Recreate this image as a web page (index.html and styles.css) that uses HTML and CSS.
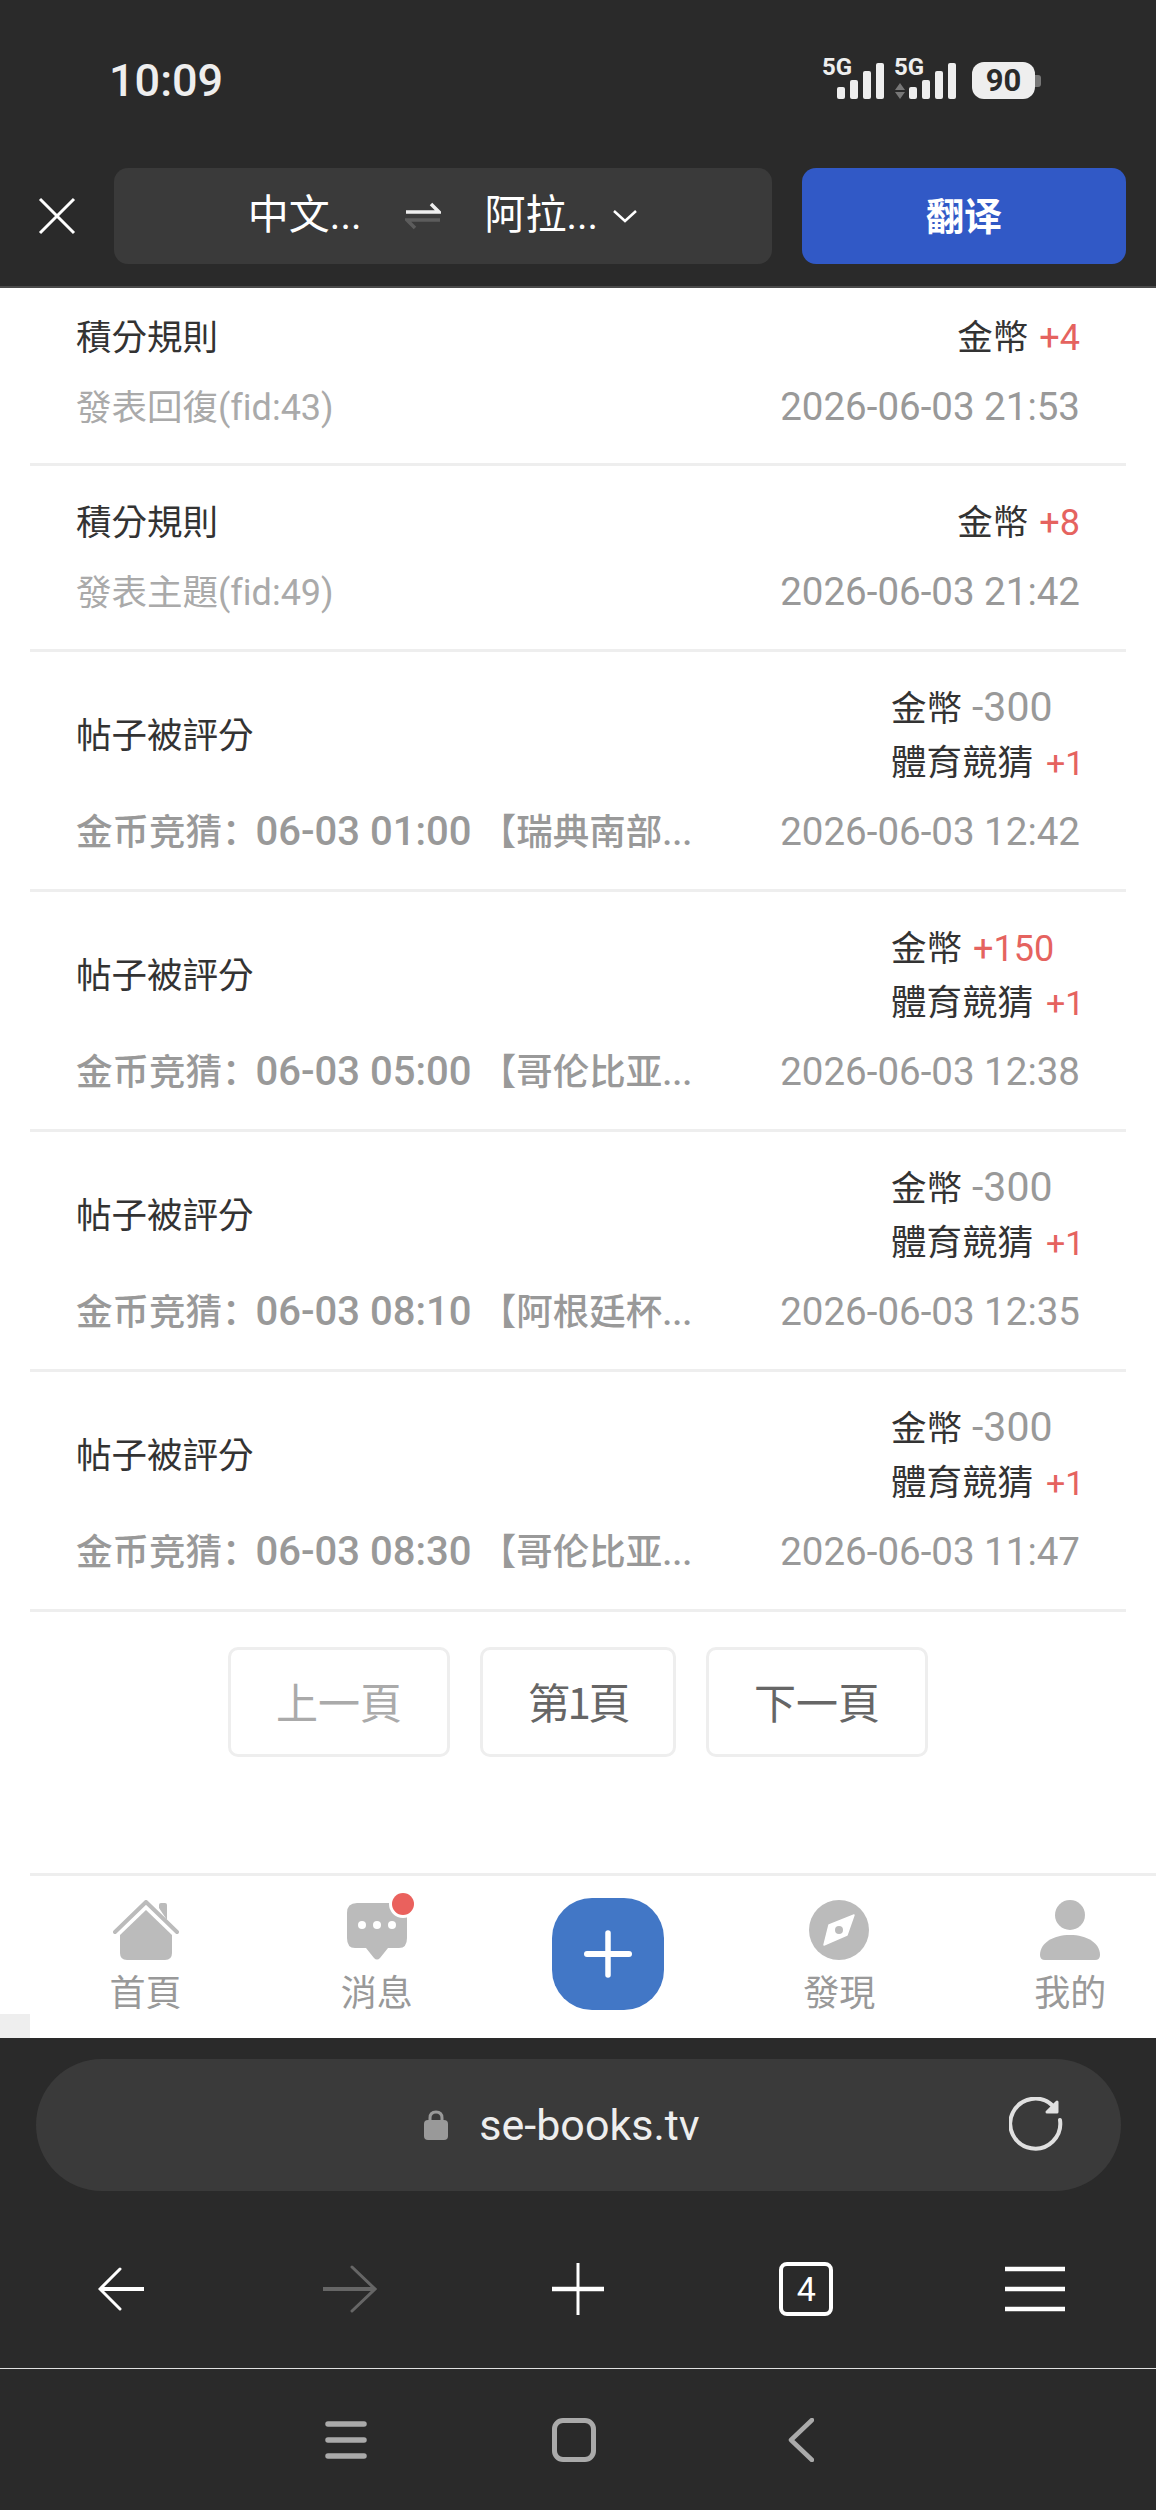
FILE: index.html
```html
<!DOCTYPE html>
<html lang="zh-Hant">
<head>
    <meta charset="UTF-8">
    <meta name="viewport" content="width=device-width, initial-scale=1.0">
    <title>積分記錄</title>
    <link rel="stylesheet" href="styles.css">
</head>
<body>
<div class="page">

    <header class="top">
        <div class="status">
            <span class="time">10:09</span>
            <div class="status-icons">
                <svg class="signal" width="62" height="56" viewBox="0 -8 62 56">
                    <text x="0" y="19" class="net">5G</text>
                    <rect x="15" y="31" width="8" height="12" rx="2"/>
                    <rect x="28" y="24" width="8" height="19" rx="2"/>
                    <rect x="41" y="15" width="8" height="28" rx="2"/>
                    <rect x="54" y="7" width="8" height="36" rx="2"/>
                </svg>
                <svg class="signal" width="62" height="56" viewBox="0 -8 62 56">
                    <text x="0" y="19" class="net">5G</text>
                    <path class="updown" d="M1 34L6 27L11 34ZM1 36H11L6 43Z"/>
                    <rect x="15" y="31" width="8" height="12" rx="2"/>
                    <rect x="28" y="24" width="8" height="19" rx="2"/>
                    <rect x="41" y="15" width="8" height="28" rx="2"/>
                    <rect x="54" y="7" width="8" height="36" rx="2"/>
                </svg>
                <div class="battery">
                    <div class="battery-body">90</div>
                    <div class="battery-nub"></div>
                </div>
            </div>
        </div>
        <div class="translate">
            <svg class="close" width="38" height="38" viewBox="0 0 38 38">
                <path d="M2 2L36 36M36 2L2 36" fill="none" stroke="#fff" stroke-width="3"/>
            </svg>
            <div class="lang-box">
                <span class="lang">中文<span class="num dots">...</span></span>
                <svg class="swap" width="36" height="28" viewBox="0 0 36 28">
                    <path d="M1 10H34L26 2" fill="none" stroke="#eee" stroke-width="3.500"/>
                    <path d="M35 18H2L10 26" fill="none" stroke="#5c5c5c" stroke-width="3.500"/>
                </svg>
                <span class="lang">阿拉<span class="num dots">...</span></span>
                <svg class="chevron" width="26" height="14" viewBox="0 0 26 14">
                    <path d="M2 2L13 12L24 2" fill="none" stroke="#fff" stroke-width="2.500"/>
                </svg>
            </div>
            <button class="translate-btn">翻译</button>
        </div>
    </header>

    <main class="main">
        <div class="list">
            <div class="row row-first">
                <div class="row-top">
                    <span class="title">積分規則</span>
                    <div class="gains gains-end">
                        <div class="gain">金幣<span class="num amount plus">+4</span></div>
                    </div>
                </div>
                <div class="row-sub">
                    <span class="reason reason-light">發表回復<span class="num">(fid:43)</span></span>
                    <span class="num date">2026-06-03 21:53</span>
                </div>
            </div>

            <div class="row">
                <div class="row-top">
                    <span class="title">積分規則</span>
                    <div class="gains gains-end">
                        <div class="gain">金幣<span class="num amount plus">+8</span></div>
                    </div>
                </div>
                <div class="row-sub">
                    <span class="reason reason-light">發表主題<span class="num">(fid:49)</span></span>
                    <span class="num date">2026-06-03 21:42</span>
                </div>
            </div>

            <div class="row">
                <div class="row-top">
                    <span class="title">帖子被評分</span>
                    <div class="gains">
                        <div class="gain">金幣<span class="num amount minus">-300</span></div>
                        <div class="gain">體育競猜<span class="num amount plus">+1</span></div>
                    </div>
                </div>
                <div class="row-sub">
                    <span class="reason" lang="zh-CN">金币竞猜：<span class="num when">06-03 01:00</span> 【瑞典南部<span class="num dots">...</span></span>
                    <span class="num date">2026-06-03 12:42</span>
                </div>
            </div>

            <div class="row">
                <div class="row-top">
                    <span class="title">帖子被評分</span>
                    <div class="gains">
                        <div class="gain">金幣<span class="num amount plus">+150</span></div>
                        <div class="gain">體育競猜<span class="num amount plus">+1</span></div>
                    </div>
                </div>
                <div class="row-sub">
                    <span class="reason" lang="zh-CN">金币竞猜：<span class="num when">06-03 05:00</span> 【哥伦比亚<span class="num dots">...</span></span>
                    <span class="num date">2026-06-03 12:38</span>
                </div>
            </div>

            <div class="row">
                <div class="row-top">
                    <span class="title">帖子被評分</span>
                    <div class="gains">
                        <div class="gain">金幣<span class="num amount minus">-300</span></div>
                        <div class="gain">體育競猜<span class="num amount plus">+1</span></div>
                    </div>
                </div>
                <div class="row-sub">
                    <span class="reason" lang="zh-CN">金币竞猜：<span class="num when">06-03 08:10</span> 【阿根廷杯<span class="num dots">...</span></span>
                    <span class="num date">2026-06-03 12:35</span>
                </div>
            </div>

            <div class="row">
                <div class="row-top">
                    <span class="title">帖子被評分</span>
                    <div class="gains">
                        <div class="gain">金幣<span class="num amount minus">-300</span></div>
                        <div class="gain">體育競猜<span class="num amount plus">+1</span></div>
                    </div>
                </div>
                <div class="row-sub">
                    <span class="reason" lang="zh-CN">金币竞猜：<span class="num when">06-03 08:30</span> 【哥伦比亚<span class="num dots">...</span></span>
                    <span class="num date">2026-06-03 11:47</span>
                </div>
            </div>
        </div>

        <div class="pager">
            <a class="page-btn page-prev">上一頁</a>
            <a class="page-btn page-now">第1頁</a>
            <a class="page-btn page-next">下一頁</a>
        </div>

        <div class="tab-wrap">
            <div class="tab-gutter"></div>
            <nav class="tabs">
                <a class="tab">
                    <svg width="66" height="60" viewBox="0 0 66 60">
                        <path d="M46 8V5Q46 3 48 3H52Q54 3 54 5V20Z" fill="#bbb"/>
                        <path d="M2 32L33 2L64 32" fill="none" stroke="#bbb" stroke-width="4" stroke-linecap="round" stroke-linejoin="round"/>
                        <path d="M33 10L59 35V53Q59 60 52 60H14Q7 60 7 53V35Z" fill="#bbb"/>
                    </svg>
                    <span>首頁</span>
                </a>
                <a class="tab">
                    <svg width="66" height="60" viewBox="-3 0 66 60" class="tab-msg">
                        <path d="M10 3H50Q60 3 60 13V38Q60 48 52 48H41L33 58Q30 61 27 58L19 48H8Q0 48 0 38V13Q0 3 10 3Z" fill="#bbb"/>
                        <circle cx="15" cy="25" r="4" fill="#fff"/>
                        <circle cx="30" cy="25" r="4" fill="#fff"/>
                        <circle cx="45" cy="25" r="4" fill="#fff"/>
                        <circle cx="56" cy="4" r="14" fill="#fff"/>
                        <circle cx="56" cy="4" r="11" fill="#ea615d"/>
                    </svg>
                    <span>消息</span>
                </a>
                <a class="tab">
                    <div class="fab">
                        <svg width="48" height="48" viewBox="0 0 48 48">
                            <path d="M24 3V45" stroke="#fff" stroke-width="5.500" stroke-linecap="round"/>
                            <path d="M3 24H45" stroke="#fff" stroke-width="6" stroke-linecap="round"/>
                        </svg>
                    </div>
                </a>
                <a class="tab">
                    <svg width="60" height="60" viewBox="0 0 60 60">
                        <circle cx="30" cy="30" r="30" fill="#bbb"/>
                        <path d="M45 15L38 35L15 45L20 25Z" fill="#fff" stroke="#fff" stroke-width="1.500" stroke-linejoin="round"/>
                        <circle cx="30" cy="30" r="4" fill="#bbb"/>
                    </svg>
                    <span>發現</span>
                </a>
                <a class="tab">
                    <svg width="60" height="60" viewBox="0 0 60 60">
                        <circle cx="30" cy="15" r="15" fill="#bbb"/>
                        <path d="M0 55C0 43 13 35 30 35C47 35 60 43 60 55Q60 60 55 60H5Q0 60 0 55Z" fill="#bbb"/>
                    </svg>
                    <span>我的</span>
                </a>
            </nav>
        </div>
    </main>

    <footer class="browser">
        <div class="url-bar">
            <div class="url">
                <svg width="24" height="30" viewBox="0 0 24 30">
                    <path d="M6 12V8Q6 2 12 2Q18 2 18 8V12" fill="none" stroke="#999" stroke-width="3"/>
                    <rect x="0" y="10" width="24" height="20" rx="4" fill="#999"/>
                </svg>
                <span>se-books.tv</span>
            </div>
            <svg width="56" height="56" viewBox="0 0 56 56">
                <path d="M51 23A25 25 0 1 1 44 9" fill="none" stroke="#e0e0e0" stroke-width="4" stroke-linecap="round"/>
                <path d="M48 5V15H38Z" fill="#e0e0e0" stroke="#e0e0e0" stroke-width="3" stroke-linejoin="round"/>
            </svg>
        </div>

        <div class="toolbar">
            <div class="tool">
                <svg width="46" height="44" viewBox="0 0 46 44">
                    <path d="M46 22H3" stroke="#fff" stroke-width="4"/>
                    <path d="M22 2L2 22L22 42" fill="none" stroke="#fff" stroke-width="3" stroke-linecap="round"/>
                </svg>
            </div>
            <div class="tool">
                <svg width="54" height="48" viewBox="0 0 54 48">
                    <path d="M0 24H51" stroke="#666" stroke-width="4"/>
                    <path d="M29 2L52 24L29 46" fill="none" stroke="#666" stroke-width="3" stroke-linecap="round"/>
                </svg>
            </div>
            <div class="tool">
                <svg width="52" height="52" viewBox="0 0 52 52">
                    <path d="M26 0V52" stroke="#fff" stroke-width="3"/>
                    <path d="M0 26H52" stroke="#fff" stroke-width="4.500"/>
                </svg>
            </div>
            <div class="tool">
                <div class="tab-count">4</div>
            </div>
            <div class="tool">
                <svg width="60" height="46" viewBox="0 0 60 46">
                    <path d="M0 3H60M0 23H60M0 43H60" stroke="#fff" stroke-width="4.500"/>
                </svg>
            </div>
        </div>

        <div class="sys-nav">
            <svg width="42" height="40" viewBox="0 0 42 40">
                <path d="M3 4H39M3 20H39M3 36H39" stroke="#aaa" stroke-width="5.500" stroke-linecap="round"/>
            </svg>
            <div class="sys-home"></div>
            <svg width="26" height="44" viewBox="0 0 26 44">
                <path d="M24 2L3 22L24 42" fill="none" stroke="#aaa" stroke-width="4.500" stroke-linecap="round" stroke-linejoin="round"/>
            </svg>
        </div>
    </footer>
</div>
</body>
</html>
```

FILE: styles.css
```css
* {
    box-sizing: border-box;
}

body {
    margin: 0;
    padding: 0;
    background-color: #fff;
    font-family: "Noto Sans CJK TC", "Noto Sans CJK SC", Roboto, sans-serif;
    font-size: 35.500px;
    font-variant-ligatures: none;
}

.num {
    font-family: Roboto, "Noto Sans", sans-serif;
    font-size: 38.500px;
}

.page {
    width: 1156px;
    height: 2510px;
    display: flex;
    flex-direction: column;
    overflow: hidden;
}

/* top bars */
.top {
    height: 288px;
    background-color: #2a2a2a;
    border-bottom: 2px solid #4a4a4a;
}

.status {
    height: 168px;
    padding: 56px 115px 0 109px;
    display: flex;
    justify-content: space-between;
    align-items: flex-start;
}

.time {
    font-family: Roboto, sans-serif;
    font-size: 45px;
    font-weight: 500;
    line-height: 50px;
    color: #eee;
}

.status-icons {
    display: flex;
    align-items: flex-start;
    gap: 10px;
}

.signal {
    margin-top: -8px;
    fill: #eee;
}

.net {
    font-family: Roboto, sans-serif;
    font-size: 24px;
    font-weight: 700;
    fill: #eee;
}

.updown {
    fill: #777;
}

.battery {
    margin-left: 6px;
    margin-top: 6px;
    display: flex;
    align-items: center;
}

.battery-body {
    width: 63px;
    height: 37px;
    border-radius: 12px;
    background-color: #eee;
    color: #2a2a2a;
    font-family: Roboto, sans-serif;
    font-size: 31px;
    font-weight: 700;
    line-height: 37px;
    text-align: center;
}

.battery-nub {
    width: 6px;
    height: 12px;
    border-radius: 0 3px 3px 0;
    background-color: #777;
}

.translate {
    height: 96px;
    display: flex;
    align-items: center;
    padding-left: 38px;
}

.close {
    flex: none;
}

.lang-box {
    width: 658px;
    height: 96px;
    margin-left: 38px;
    border-radius: 14px;
    background-color: #3a3a3a;
    display: flex;
    align-items: center;
    justify-content: center;
    color: #fff;
}

.lang {
    font-size: 41px;
    line-height: 50px;
    margin-bottom: 6px;
}

.lang .dots {
    font-size: 40px;
}

.swap {
    margin: 0 44px 0 43px;
}

.chevron {
    margin-left: 14px;
}

.translate-btn {
    width: 324px;
    height: 96px;
    margin-left: 30px;
    padding: 0 0 6px;
    border: none;
    border-radius: 14px;
    background-color: #3159c6;
    color: #fff;
    font-family: inherit;
    font-size: 38px;
    font-weight: 700;
}

/* record list */
.main {
    flex: 1;
    display: flex;
    flex-direction: column;
}

.list {
    padding: 0 30px;
}

.row {
    padding: 27px 46px 30px;
    border-bottom: 3px solid #eee;
}

.row-first {
    padding-top: 20px;
    padding-bottom: 29px;
}

.row-top {
    display: flex;
    justify-content: space-between;
    align-items: center;
}

.title {
    line-height: 54px;
    color: #333;
}

.gains-end {
    text-align: right;
}

.gains:not(.gains-end) {
    width: 189px;
}

.gain {
    height: 54px;
    line-height: 54px;
    color: #333;
    white-space: nowrap;
}

.amount {
    margin-left: 11px;
    color: #999;
}

.minus {
    font-size: 41px;
    margin-left: 10px;
}

.plus {
    font-size: 36px;
    color: #e5635f;
}

.gain + .gain .plus {
    font-size: 34px;
    margin-left: 13px;
}

.row-sub {
    height: 54px;
    margin-top: 18px;
    display: flex;
    justify-content: space-between;
    line-height: 54px;
    color: #999;
}

.reason {
    font-size: 36.500px;
    font-weight: 500;
    line-height: 50px;
}

.reason[lang="zh-CN"] {
    font-family: "Noto Sans CJK SC", Roboto, sans-serif;
}

.reason .num {
    font-size: 40px;
}

.reason .when {
    margin-left: -3px;
}

.reason .dots {
    font-size: 36px;
}

.reason-light {
    font-size: 35.500px;
    font-weight: 400;
    color: #aaa;
}

.reason-light .num {
    font-size: 36px;
}

.date {
    color: #999;
}

/* pager */
.pager {
    margin-top: 35px;
    display: flex;
    justify-content: center;
    gap: 30px;
}

.page-btn {
    height: 110px;
    border: 3px solid #eee;
    border-radius: 10px;
    font-size: 42px;
    line-height: 102px;
    text-align: center;
    color: #666;
}

.page-prev {
    width: 222px;
    color: #aaa;
}

.page-now {
    width: 196px;
    letter-spacing: -2.500px;
}

.page-next {
    width: 222px;
}

/* bottom tabs */
.tab-wrap {
    margin-top: auto;
    height: 165px;
    display: flex;
    align-items: flex-end;
}

.tab-gutter {
    flex: none;
    width: 30px;
    height: 24px;
    background-color: #eee;
}

.tabs {
    flex: none;
    width: 1156px;
    height: 165px;
    padding-top: 24px;
    border-top: 3px solid #eee;
    display: flex;
    background-color: #fff;
}

.tab {
    flex: none;
    width: 231.200px;
    display: flex;
    flex-direction: column;
    align-items: center;
    font-size: 36px;
    line-height: 48px;
    color: #999;
}

.tab span {
    margin-top: 6px;
}

.tab svg {
    display: block;
}

.tab-msg {
    overflow: visible;
}

.fab {
    width: 112px;
    height: 112px;
    margin-top: -2px;
    border-radius: 40px;
    background-color: #4277c6;
    display: flex;
    align-items: center;
    justify-content: center;
}

/* browser chrome */
.browser {
    height: 472px;
    background-color: #2a2a2a;
    padding-top: 21px;
}

.url-bar {
    width: 1085px;
    height: 132px;
    margin-left: 36px;
    padding: 0 56px 0 79px;
    border-radius: 66px;
    background-color: #3a3a3a;
    display: flex;
    align-items: center;
}

.url {
    flex: 1;
    display: flex;
    align-items: center;
    justify-content: center;
    gap: 31px;
    color: #eee;
    font-family: Roboto, sans-serif;
    font-size: 43px;
}

.toolbar {
    height: 178px;
    padding: 18px 7px 0;
    display: grid;
    grid-template-columns: repeat(5, 1fr);
    align-items: center;
    border-bottom: 1px solid #e0e0e0;
}

.tool {
    display: flex;
    justify-content: center;
}

.tab-count {
    width: 54px;
    height: 54px;
    border: 4px solid #fff;
    border-radius: 8px;
    color: #fff;
    font-family: Roboto, sans-serif;
    font-size: 34px;
    line-height: 46px;
    text-align: center;
}

.sys-nav {
    height: 141px;
    padding-left: 325px;
    display: flex;
    align-items: center;
    gap: 185px;
}

.sys-home {
    width: 44px;
    height: 44px;
    border: 5px solid #aaa;
    border-radius: 11px;
    margin-right: 7px;
}
```
